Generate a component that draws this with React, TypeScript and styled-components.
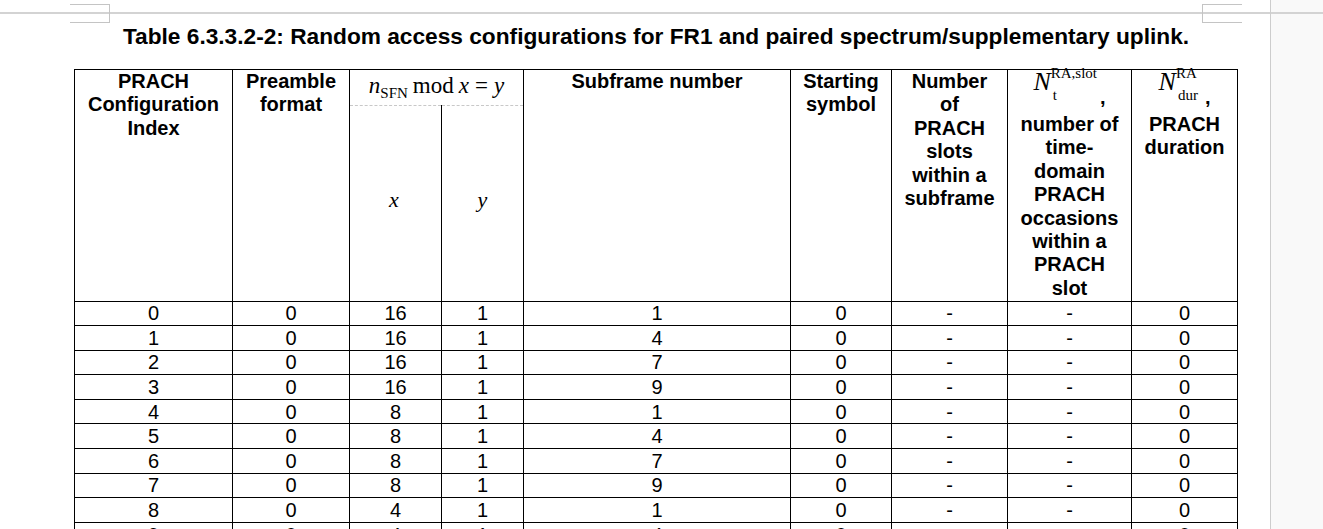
import React from "react"
import styled, { createGlobalStyle, css } from "styled-components"

const GlobalStyle = createGlobalStyle`
  html, body {
    margin: 0;
    padding: 0;
    overflow: hidden;
    background: #ffffff;
  }
`

const pageRule = css`
  background-image: linear-gradient(#d3d3d3, #d3d3d3);
  background-repeat: no-repeat;
  background-size: 100% 2px;
  background-position: 0 12px;
`

const Viewer = styled.div`
  display: flex;
  height: 529px;
  overflow: hidden;
`

const Page = styled.div`
  width: 1270px;
  flex-shrink: 0;
  background-color: #ffffff;
  ${pageRule}
`

const Gutter = styled.div`
  flex: 1;
  background-color: #f9f9f9;
  border-left: 1px solid #cdcdcd;
  ${pageRule}
`

const MarkRow = styled.div`
  display: flex;
  justify-content: space-between;
  padding: 4px 28px 0 70px;
`

const CropMark = styled.div<{ $side: "left" | "right" }>`
  width: 40px;
  height: 19px;
  box-sizing: border-box;
  border: 1px solid #c4c4c4;
  ${({ $side }) => ($side === "left" ? "border-left: none;" : "border-right: none;")}
`

const Caption = styled.h1`
  margin: 0 0 0 74px;
  width: 1164px;
  font: bold 22.7px/26px "Liberation Sans", Arial, sans-serif;
  text-align: center;
  white-space: nowrap;
  color: #000;
`

const Grid = styled.table`
  margin: 20px 0 0 74px;
  border-collapse: collapse;
  table-layout: fixed;
  width: 1164px;
  color: #000;
`

const HeadRow = styled.tr<{ $h: number }>`
  height: ${({ $h }) => $h}px;
`

const HeadCell = styled.th`
  border: 1px solid #000;
  padding: 0 11px;
  vertical-align: top;
  text-align: center;
  font: bold 20px/23.4px "Liberation Sans", Arial, sans-serif;
`

const FormulaCell = styled(HeadCell)`
  vertical-align: middle;
  padding: 0 4px;
  border-bottom: 1px dashed #c8c8c8;
`

const VarCell = styled(HeadCell)`
  border-top: none;
  vertical-align: middle;
  padding: 0 0 6px;
`

const DataRow = styled.tr`
  height: 24.6px;
`

const Cell = styled.td`
  border: 1px solid #000;
  padding: 0;
  text-align: center;
  vertical-align: middle;
  font: 20px/22px "Liberation Sans", Arial, sans-serif;
`

const Formula = styled.span`
  font: 23px/1 "Liberation Serif", "Times New Roman", serif;
  white-space: nowrap;
`

const Var = styled.i<{ $size?: number; $shift?: number }>`
  font-style: italic;
  font-family: "Liberation Serif", "Times New Roman", serif;
  font-weight: normal;
  font-size: ${({ $size }) => $size ?? 23}px;
  margin-left: ${({ $shift }) => $shift ?? 0}px;
`

const Lower = styled.span`
  font-size: 15px;
  vertical-align: -5px;
`

const Op = styled.span<{ $gap: number }>`
  margin: 0 ${({ $gap }) => $gap}px;
`

const SymbolLine = styled.div`
  height: 43px;
  white-space: nowrap;
  line-height: 1;
`

const BigN = styled.span`
  font: italic 26px/24px "Liberation Serif", "Times New Roman", serif;
`

const Scripts = styled.span`
  display: inline-flex;
  flex-direction: column;
  align-items: flex-start;
  vertical-align: 12px;
  margin-top: -5px;
  font: 15px/15px "Liberation Serif", "Times New Roman", serif;
`

const SubScript = styled.span`
  margin-top: 7px;
  padding-left: 2px;
`

const Comma = styled.span<{ $gap: number }>`
  font: bold 20px/20px "Liberation Sans", Arial, sans-serif;
  vertical-align: -14px;
  margin-left: ${({ $gap }) => $gap}px;
`

const widths = [158, 117, 92, 82, 267, 101, 116, 124, 106]

const rows = [
  ["0", "0", "16", "1", "1", "0", "-", "-", "0"],
  ["1", "0", "16", "1", "4", "0", "-", "-", "0"],
  ["2", "0", "16", "1", "7", "0", "-", "-", "0"],
  ["3", "0", "16", "1", "9", "0", "-", "-", "0"],
  ["4", "0", "8", "1", "1", "0", "-", "-", "0"],
  ["5", "0", "8", "1", "4", "0", "-", "-", "0"],
  ["6", "0", "8", "1", "7", "0", "-", "-", "0"],
  ["7", "0", "8", "1", "9", "0", "-", "-", "0"],
  ["8", "0", "4", "1", "1", "0", "-", "-", "0"],
  ["9", "0", "4", "1", "4", "0", "-", "-", "0"],
  ["10", "0", "4", "1", "7", "0", "-", "-", "0"],
]

export default function App() {
  return (
    <>
      <GlobalStyle />
      <Viewer>
        <Page>
          <MarkRow>
            <CropMark $side="left" />
            <CropMark $side="right" />
          </MarkRow>
          <Caption>
            Table 6.3.3.2-2: Random access configurations for FR1 and paired
            spectrum/supplementary uplink.
          </Caption>
          <Grid>
            <colgroup>
              {widths.map((w, i) => (
                <col key={i} style={{ width: w }} />
              ))}
            </colgroup>
            <thead>
              <HeadRow $h={36}>
                <HeadCell rowSpan={2}>PRACH Configuration Index</HeadCell>
                <HeadCell rowSpan={2}>Preamble format</HeadCell>
                <FormulaCell colSpan={2}>
                  <Formula>
                    <Var>n</Var>
                    <Lower>SFN</Lower>
                    <Op $gap={5}>mod</Op>
                    <Var>x</Var>
                    <Op $gap={6}>=</Op>
                    <Var>y</Var>
                  </Formula>
                </FormulaCell>
                <HeadCell rowSpan={2}>Subframe number</HeadCell>
                <HeadCell rowSpan={2}>Starting symbol</HeadCell>
                <HeadCell rowSpan={2}>Number of PRACH slots within a subframe</HeadCell>
                <HeadCell rowSpan={2}>
                  <SymbolLine>
                    <BigN>N</BigN>
                    <Scripts>
                      <span>RA,slot</span>
                      <SubScript>t</SubScript>
                    </Scripts>
                    <Comma $gap={3}>,</Comma>
                  </SymbolLine>
                  number of time-domain PRACH occasions within a PRACH slot
                </HeadCell>
                <HeadCell rowSpan={2}>
                  <SymbolLine>
                    <BigN>N</BigN>
                    <Scripts>
                      <span>RA</span>
                      <SubScript>dur</SubScript>
                    </Scripts>
                    <Comma $gap={7}>,</Comma>
                  </SymbolLine>
                  PRACH duration
                </HeadCell>
              </HeadRow>
              <HeadRow $h={195.5}>
                <VarCell>
                  <Var $size={22} $shift={-3}>x</Var>
                </VarCell>
                <VarCell>
                  <Var $size={22}>y</Var>
                </VarCell>
              </HeadRow>
            </thead>
            <tbody>
              {rows.map((r) => (
                <DataRow key={r[0]}>
                  {r.map((v, i) => (
                    <Cell key={i}>{v}</Cell>
                  ))}
                </DataRow>
              ))}
            </tbody>
          </Grid>
        </Page>
        <Gutter />
      </Viewer>
    </>
  )
}
